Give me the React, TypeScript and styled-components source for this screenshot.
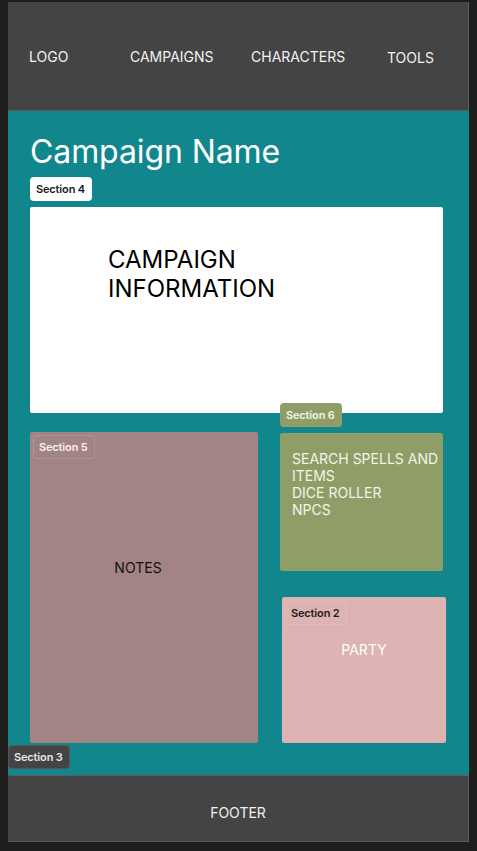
import React from 'react';
import styled, { createGlobalStyle } from 'styled-components';

const GlobalStyle = createGlobalStyle`
    * {
        box-sizing: border-box;
    }

    body {
        margin: 0;
        background: #1e1e1e;
        font-family: Inter, "Noto Sans", sans-serif;
    }
`

const Frame = styled.div `
    display: flex;
    flex-direction: column;
    width: 461px;
    margin: 2px 0 0 8px;
`

const Header = styled.header `
    display: grid;
    grid-template-columns: 101px 121px 136px auto;
    align-items: center;
    height: 109px;
    padding-left: 21px;
    background: #444444;
    border-bottom: 1px solid #5c5c5c;
    border-right: 1px solid #5c5c5c;
`

const NavItem = styled.span <{ $nudge?: number }> `
    color: #f2f2f2;
    font-size: 14px;
    line-height: 17px;
    padding-top: ${props => props.$nudge || 0}px;
`

const Main = styled.main `
    position: relative;
    display: flex;
    flex-direction: column;
    padding: 21px 26px 32px 22px;
    background: #11878d;
`

const Title = styled.h1 `
    margin: 0;
    color: #ffffff;
    font-size: 32px;
    font-weight: 400;
    line-height: 39px;
    letter-spacing: -0.1px;
`

interface BadgeProps {
    $bg: string;
    $fg: string;
    $border?: string;
}

const Badge = styled.span <BadgeProps> `
    display: inline-flex;
    align-items: center;
    width: 62px;
    height: 24px;
    padding-left: 5px;
    border-radius: 4px;
    background: ${props => props.$bg};
    color: ${props => props.$fg};
    border: 1px solid ${props => props.$border || 'transparent'};
    font-size: 11px;
    font-weight: 600;
    letter-spacing: -0.15px;
    white-space: nowrap;
`

const InlineBadge = styled(Badge) `
    margin: 6px 0;
`

const FloatBadge = styled(Badge) <{ $top: number; $left: number }> `
    position: absolute;
    top: ${props => props.$top}px;
    left: ${props => props.$left}px;
`

const CornerBadge = styled(Badge) `
    position: absolute;
    left: 0;
    bottom: 6px;
`

const InfoCard = styled.section `
    height: 206px;
    padding: 38px 0 0 78px;
    background: #ffffff;
    border-radius: 2px;
    color: #000000;
    font-size: 24px;
    line-height: 29px;
`

const Grid = styled.div `
    display: grid;
    grid-template-columns: 228px 163px;
    column-gap: 22px;
    margin-top: 19px;
`

const Column = styled.div `
    display: flex;
    flex-direction: column;
    gap: 26px;
`

interface CardProps {
    $bg: string;
    $height: number;
    $shift?: number;
}

const Card = styled.section <CardProps> `
    position: relative;
    height: ${props => props.$height}px;
    background: ${props => props.$bg};
    border-radius: 2px;
    margin-top: ${props => props.$shift || 0}px;
    font-size: 14px;
    line-height: 17px;
`

const NotesCard = styled(Card) `
    display: flex;
    justify-content: center;
    padding: 127px 12px 0 0;
    color: #111111;
`

const ToolsCard = styled(Card) `
    padding: 17px 0 0 12px;
    color: #f4f4ec;
    white-space: nowrap;
`

const PartyCard = styled(Card) `
    width: 164px;
    margin-left: 2px;
    padding-top: 44px;
    text-align: center;
    color: #ffffff;
`

const Footer = styled.footer `
    display: flex;
    justify-content: center;
    align-items: center;
    height: 67px;
    padding-top: 7px;
    background: #444444;
    border-top: 1px solid #5c5c5c;
    border-right: 1px solid #5c5c5c;
    border-bottom: 1px solid #5c5c5c;
    color: #f2f2f2;
    font-size: 14px;
`

export default function App() {
    return (
        <>
            <GlobalStyle />
            <Frame>
                <Header>
                    <NavItem>LOGO</NavItem>
                    <NavItem>CAMPAIGNS</NavItem>
                    <NavItem>CHARACTERS</NavItem>
                    <NavItem $nudge={2}>TOOLS</NavItem>
                </Header>

                <Main>
                    <Title>Campaign Name</Title>
                    <div>
                        <InlineBadge $bg="#ffffff" $fg="#1a1a1a">Section 4</InlineBadge>
                    </div>
                    <InfoCard>
                        CAMPAIGN<br />INFORMATION
                    </InfoCard>

                    <Grid>
                        <NotesCard $bg="#a28484" $height={311}>
                            <FloatBadge $top={3} $left={3} $bg="#a28484" $fg="#f6f0f0" $border="rgba(255,255,255,0.12)">Section 5</FloatBadge>
                            NOTES
                        </NotesCard>

                        <Column>
                            <ToolsCard $bg="#8f9e66" $height={138} $shift={1}>
                                <FloatBadge $top={-30} $left={0} $bg="#8f9e66" $fg="#f4f4e8">Section 6</FloatBadge>
                                SEARCH SPELLS AND<br />
                                ITEMS<br />
                                DICE ROLLER<br />
                                NPCS
                            </ToolsCard>
                            <PartyCard $bg="#deb3b3" $height={146}>
                                <FloatBadge $top={4} $left={3} $bg="#deb3b3" $fg="#1e1e1e" $border="rgba(255,255,255,0.12)">Section 2</FloatBadge>
                                PARTY
                            </PartyCard>
                        </Column>
                    </Grid>

                    <CornerBadge $bg="#444444" $fg="#e6e6e6" $border="#555555">Section 3</CornerBadge>
                </Main>

                <Footer>FOOTER</Footer>
            </Frame>
        </>
    );
}
